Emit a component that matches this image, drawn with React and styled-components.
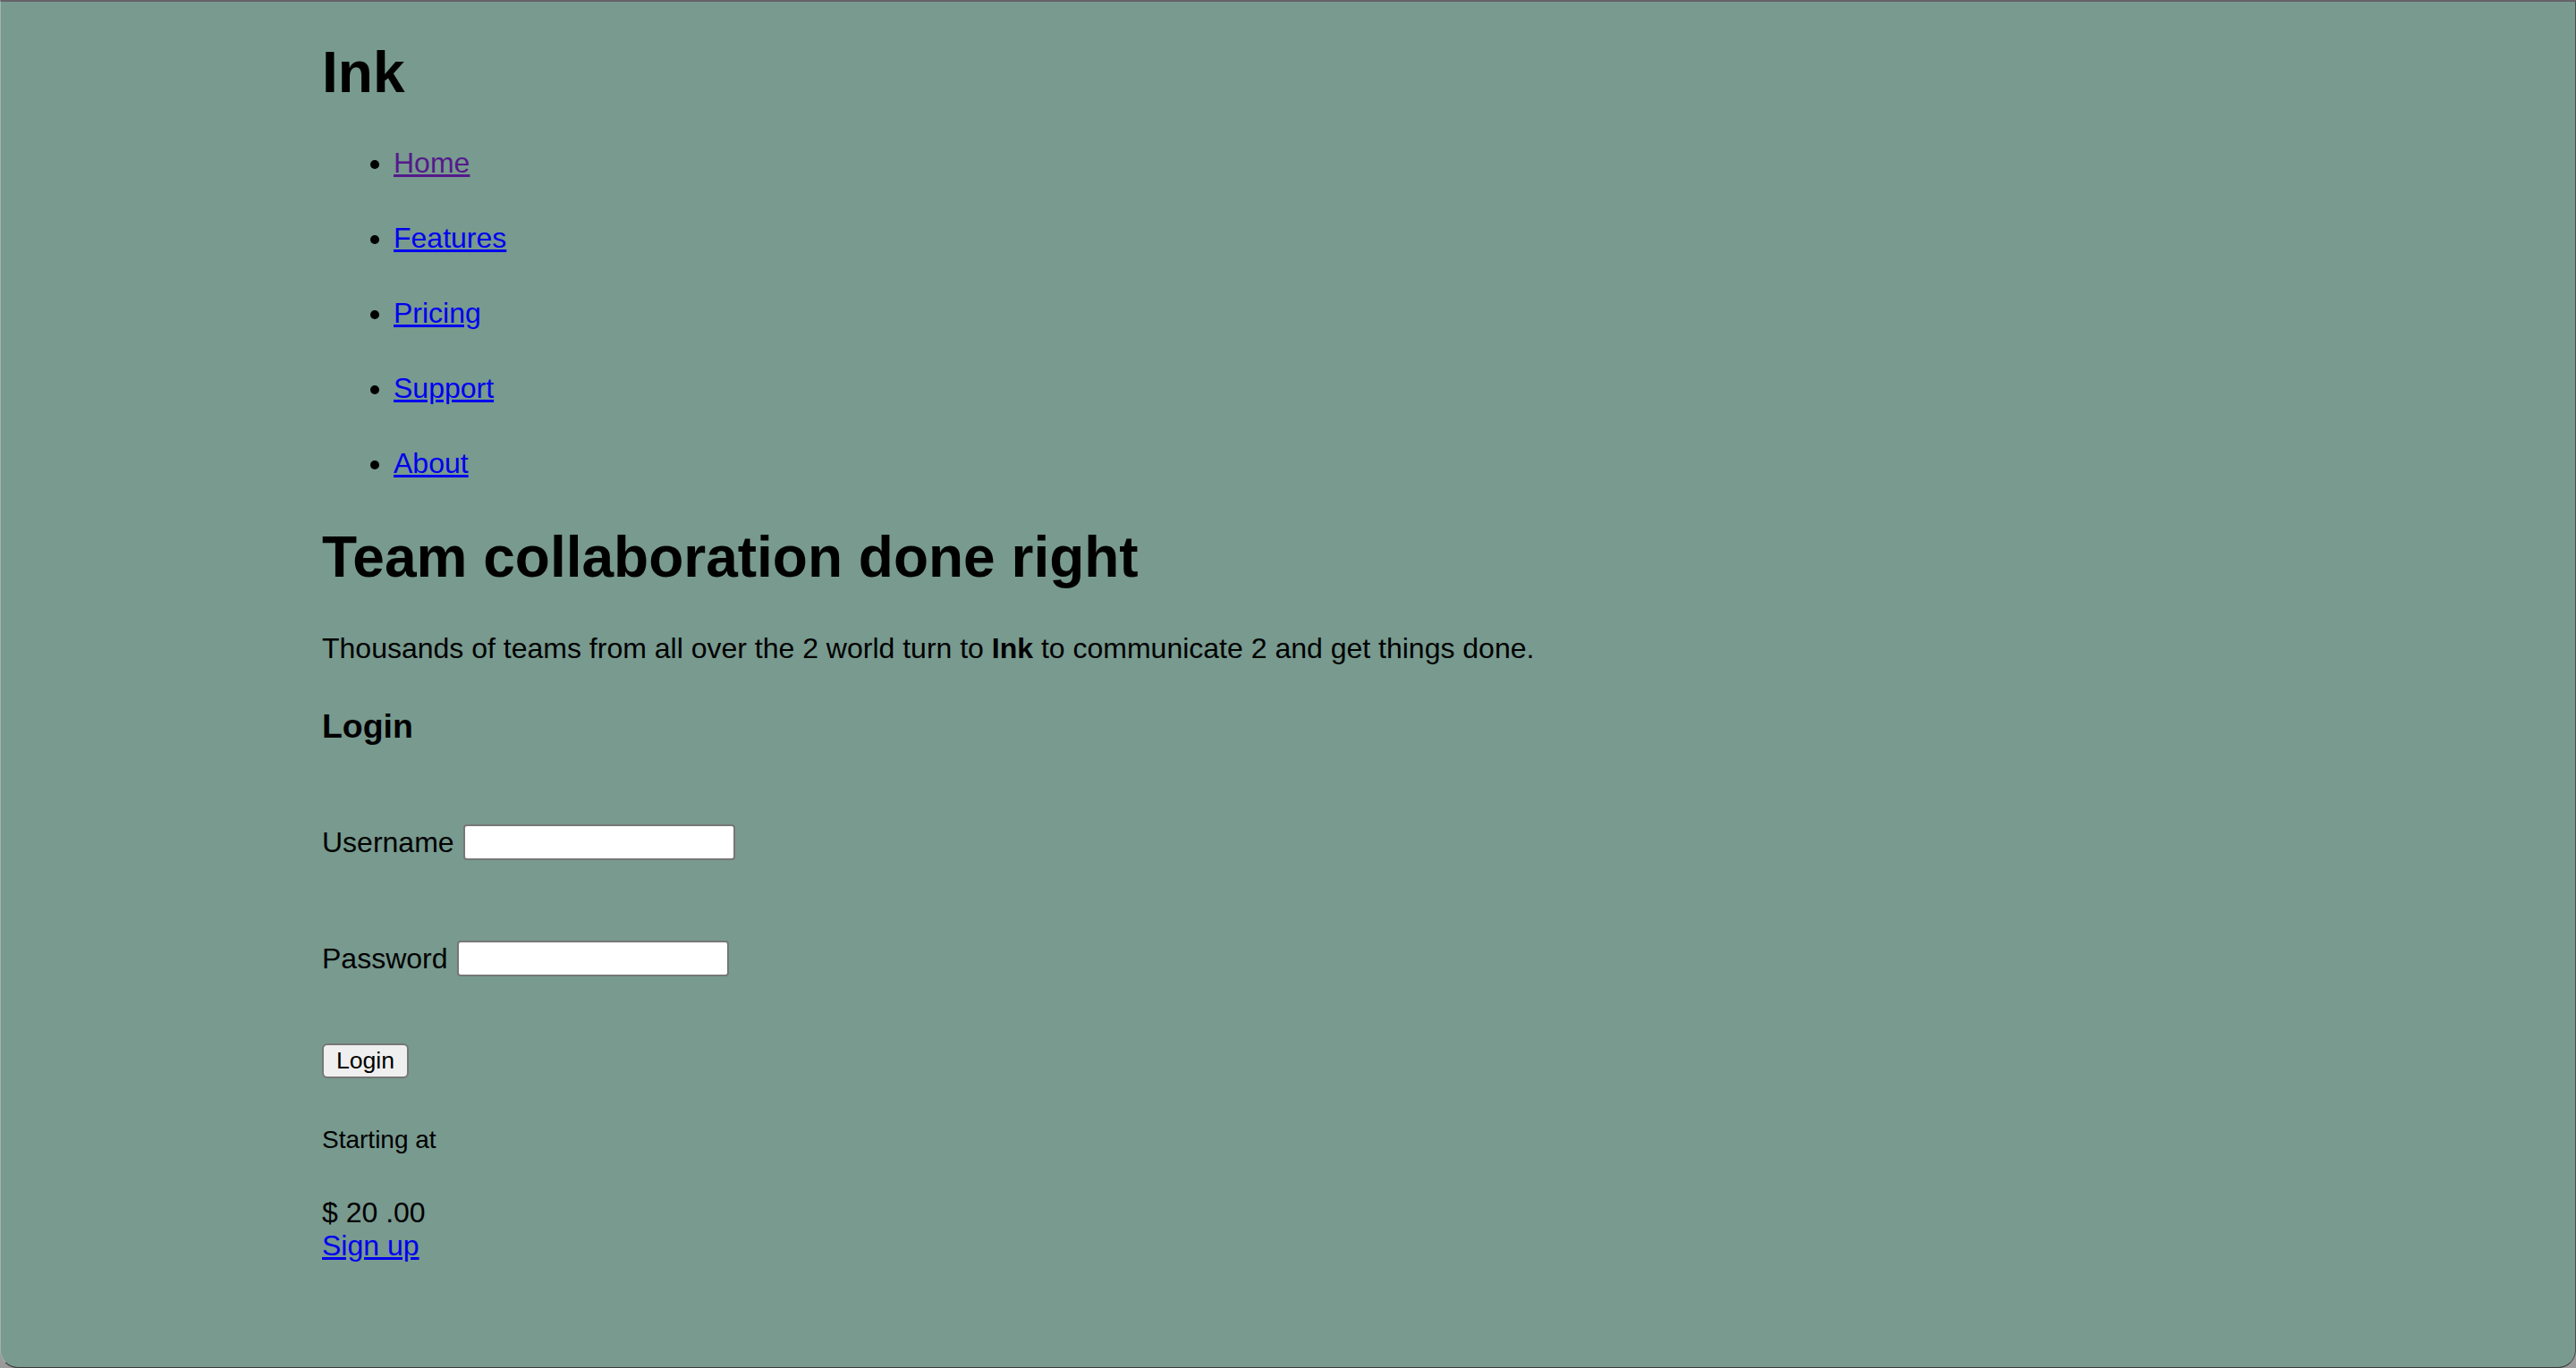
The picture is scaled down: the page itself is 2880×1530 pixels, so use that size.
import React from "react";
import styled, { createGlobalStyle } from "styled-components";

const GlobalStyle = createGlobalStyle`
  html, body {
    margin: 0;
    padding: 0;
    background: #9a9a9a;
  }
  body {
    font-family: "Liberation Sans", Helvetica, Arial, sans-serif;
    color: #000;
  }
`;

const Frame = styled.div`
  box-sizing: border-box;
  height: 1530px;
  background: #789a8f;
  border-top: 2px solid #646268;
  border-left: 1px solid #9fb3ab;
  border-right: 1px solid #4d4d4d;
  border-bottom: 1px solid #3a3a3a;
  border-radius: 0 0 20px 20px;
  overflow: hidden;
`;

const Container = styled.div`
  padding-left: 359px;
`;

const Title = styled.h1`
  margin: 43px 0 0;
  font-size: 64px;
  line-height: 1.15;
  font-weight: 700;
`;

const NavList = styled.ul`
  margin: 45px 0 0;
  padding-left: 80px;
  list-style: disc;
`;

const NavItem = styled.li`
  font-size: 32px;
  line-height: 1.15;
  & + & {
    margin-top: 47.2px;
  }
`;

const NavLink = styled.a`
  color: ${(p) => (p.$visited ? "#551a8b" : "#0000ee")};
  text-decoration: underline;
`;

const Hero = styled.h2`
  margin: 51px 0 0;
  font-size: 64px;
  line-height: 1.15;
  font-weight: 700;
`;

const Lead = styled.p`
  margin: 46px 0 0;
  font-size: 32px;
  line-height: 1.15;
`;

const FormTitle = styled.h3`
  margin: 47px 0 0;
  font-size: 37.44px;
  line-height: 1.15;
  font-weight: 700;
`;

const Form = styled.form`
  margin: 0;
`;

const FormRow = styled.div`
  display: flex;
  align-items: center;
  gap: 10px;
  margin-top: ${(p) => p.$top}px;
  height: 40px;
`;

const Label = styled.label`
  font-size: 32px;
  line-height: 1.15;
`;

const Input = styled.input`
  box-sizing: border-box;
  width: 304px;
  height: 40px;
  padding: 2px 4px;
  background: #fff;
  border: 2px solid #767676;
  border-radius: 4px;
  font-size: 26.67px;
  font-family: inherit;
`;

const Button = styled.button`
  display: block;
  box-sizing: border-box;
  margin-top: 75px;
  width: 97px;
  height: 39px;
  padding: 0;
  background: #efefef;
  border: 2px solid #767676;
  border-radius: 6px;
  font-size: 26.67px;
  font-family: inherit;
  color: #000;
`;

const PriceNote = styled.p`
  margin: 53px 0 0;
  font-size: 28px;
  line-height: 1.15;
`;

const Price = styled.div`
  margin-top: 46.3px;
  font-size: 32px;
  line-height: 1.15;
`;

const SignUp = styled.a`
  display: inline-block;
  font-size: 32px;
  line-height: 1.15;
  color: #0000ee;
  text-decoration: underline;
`;

const links = ["Home", "Features", "Pricing", "Support", "About"];

const App = () => {
  return (
    <>
      <GlobalStyle />
      <Frame>
        <Container>
          <Title>Ink</Title>
          <nav>
            <NavList>
              {links.map((l, i) => (
                <NavItem key={l}>
                  <NavLink href="#" $visited={i === 0}>
                    {l}
                  </NavLink>
                </NavItem>
              ))}
            </NavList>
          </nav>
          <Hero>Team collaboration done right</Hero>
          <Lead>
            Thousands of teams from all over the 2 world turn to <b>Ink</b> to
            communicate 2 and get things done.
          </Lead>
          <FormTitle>Login</FormTitle>
          <Form onSubmit={(e) => e.preventDefault()}>
            <FormRow $top={88.5}>
              <Label htmlFor="username">Username</Label>
              <Input id="username" type="text" />
            </FormRow>
            <FormRow $top={90}>
              <Label htmlFor="password">Password</Label>
              <Input id="password" type="password" />
            </FormRow>
            <Button type="submit">Login</Button>
          </Form>
          <PriceNote>Starting at</PriceNote>
          <Price>$ 20 .00</Price>
          <SignUp href="#">Sign up</SignUp>
        </Container>
      </Frame>
    </>
  );
};

export default App;
